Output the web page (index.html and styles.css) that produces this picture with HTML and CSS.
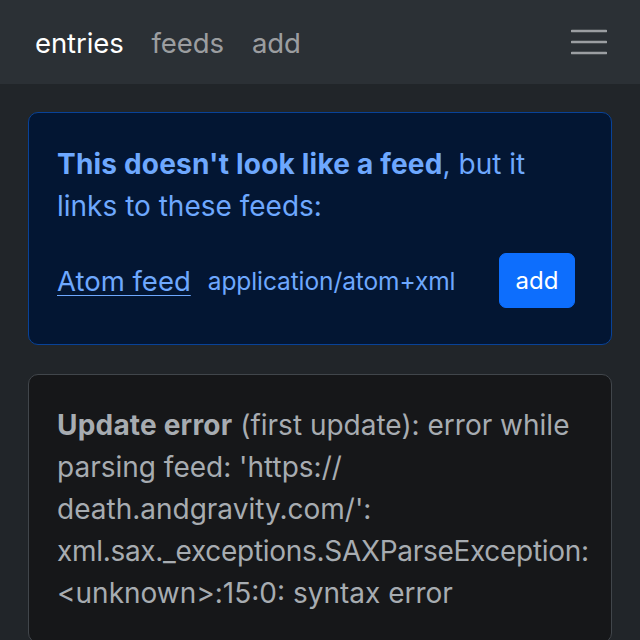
FILE: index.html
```html
<!DOCTYPE html>
<html lang="en">
<head>
<meta charset="utf-8">
<title>reader</title>
<link rel="stylesheet" href="styles.css">
</head>
<body>
<nav class="navbar">
  <div class="nav-links">
    <a class="nav-link active" href="#">entries</a>
    <a class="nav-link" href="#">feeds</a>
    <a class="nav-link" href="#">add</a>
  </div>
  <button class="toggler" aria-label="menu">
    <svg width="36" height="28" viewBox="0 0 36 28"><path d="M1 3h34M1 14h34M1 25h34" stroke="#9b9ea2" stroke-width="2.6" stroke-linecap="round" fill="none"/></svg>
  </button>
</nav>
<main class="container">
  <div class="alert alert-primary">
    <p class="alert-text"><b>This doesn't look like a feed</b>, but it links to these feeds:</p>
    <div class="feed-row">
      <a class="feed-link" href="#">Atom feed</a>
      <span class="feed-type">application/atom+xml</span>
      <button class="btn-add">add</button>
    </div>
  </div>
  <div class="alert alert-secondary">
    <p class="alert-text"><b>Update error</b> (first update): error while parsing feed: 'https://<wbr>death.andgravity.com/':<wbr> <span class="exc">xml.sax._exceptions.SAXParseException:</span> &lt;unknown&gt;:15:0: syntax error</p>
  </div>
</main>
</body>
</html>
```

FILE: styles.css
```css
* { box-sizing: border-box; }
html, body { margin: 0; padding: 0; }
body {
  background: #212529;
  font-family: Inter, "Noto Sans", "Liberation Sans", sans-serif;
  font-size: 28px;
  line-height: 42px;
  color: #dee2e6;
  height: 640px;
  overflow: hidden;
}
.navbar {
  height: 84px;
  background: #2b3035;
  display: flex;
  align-items: center;
  justify-content: space-between;
  padding: 2px 28px 0 35px;
}
.nav-links { display: flex; gap: 28px; }
.nav-link {
  color: rgba(255,255,255,0.55);
  text-decoration: none;
  font-size: 27.5px;
  letter-spacing: -0.1px;
}
.nav-link.active { color: #fff; }
.toggler {
  background: none;
  border: 0;
  padding: 0;
  margin-right: 5px;
  margin-top: -2px;
  display: flex;
}
.container { padding: 28px 28px 0 28px; }
.alert {
  border: 1px solid;
  border-radius: 10px;
  padding: 30px 28px 28px;
  margin-bottom: 29px;
}
.alert-primary {
  background: #031633;
  border-color: #084298;
  color: #6ea8fe;
}
.alert-secondary {
  background: #161719;
  border-color: #41464b;
  color: #a7acb1;
  padding-top: 29px;
}
.alert-text { margin: 0; font-size: 28px; letter-spacing: 0; }
.alert-text b { letter-spacing: 0.2px; }
.alert-text .exc { letter-spacing: -0.3px; }
.alert-primary .alert-text { margin-bottom: 26px; }
.feed-row {
  display: flex;
  align-items: center;
  padding-bottom: 8px;
  height: 63px;
}
.feed-link {
  color: #6ea8fe;
  font-size: 27.5px;
  text-decoration: underline;
  text-underline-offset: 4px;
  text-decoration-thickness: 1px;
}
.feed-type { font-size: 24.5px; margin-left: 17px; letter-spacing: -0.1px; }
.btn-add {
  margin-left: auto;
  margin-right: 8px;
  background: #0d6efd;
  border: 1px solid #0d6efd;
  color: #fff;
  border-radius: 7px;
  font-family: inherit;
  font-size: 24px;
  line-height: 36px;
  padding: 8.5px 0;
  width: 76px;
  text-align: center;
}
```
